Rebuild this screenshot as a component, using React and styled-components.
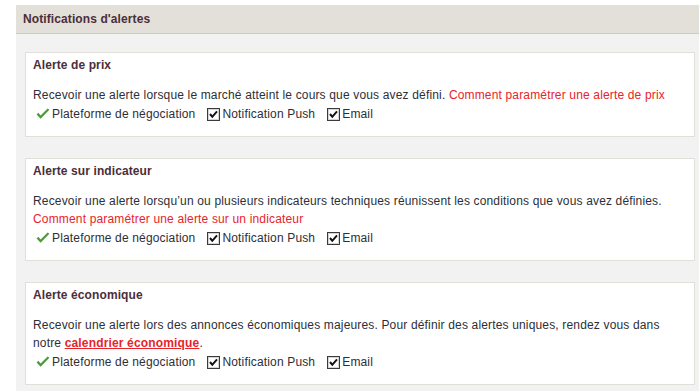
import React from "react";
import styled, { createGlobalStyle } from "styled-components";

const Global = createGlobalStyle`
  html, body { margin: 0; padding: 0; background: #ffffff; }
  body { font-family: "Liberation Sans", Arial, sans-serif; font-size: 12px; color: #333333; letter-spacing: 0.16px; }
`;

const Page = styled.div`
  padding: 5px 0 0 16px;
  width: 683px;
`;

const Header = styled.div`
  height: 28px;
  background: #e3e0d9;
  border-bottom: 1px solid #cdcac2;
  display: flex;
  align-items: center;
  padding-left: 7px;
  font-weight: bold;
  font-size: 12px;
  color: #4b2e39;
  letter-spacing: 0.1px;
`;

const Content = styled.div`
  background: #f2f2f2;
  padding: 18px 4px 8px 9px;
  display: flex;
  flex-direction: column;
  gap: 21px;
`;

const Card = styled.section`
  background: #ffffff;
  border: 1px solid #e2dfd8;
  padding: 4px 8px 12px 7px;
`;

const Title = styled.h3`
  margin: 0 0 13px 0;
  font-size: 12px;
  line-height: 16px;
  font-weight: bold;
  color: #4b2e39;
  letter-spacing: 0.1px;
`;

const Body = styled.p`
  margin: 0;
  line-height: 18px;
  color: #2e2e36;
`;

const Link = styled.a`
  color: #e8232a;
  text-decoration: ${(p) => (p.$strong ? "underline" : "none")};
  font-weight: ${(p) => (p.$strong ? "bold" : "normal")};
  cursor: pointer;
`;

const Options = styled.div`
  display: flex;
  align-items: center;
  gap: 12px;
  height: 20px;
  padding-left: 3px;
`;

const Option = styled.span`
  display: inline-flex;
  align-items: center;
  gap: 2px;
  color: #2e2e36;
`;

const Check = () => (
  <svg width="14" height="12" viewBox="0 0 14 12" aria-hidden="true">
    <path d="M0.6 6.4 L4.6 10.8 L13.4 1.8 L11.6 0.4 L4.6 7.4 L2.4 4.8 Z" fill="#4e9a3a" />
  </svg>
);

const Box = () => (
  <svg width="13" height="13" viewBox="0 0 13 13" aria-hidden="true">
    <rect x="0.5" y="0.5" width="12" height="12" fill="#ffffff" stroke="#3a3a3a" />
    <rect x="1.5" y="1.5" width="10" height="10" fill="none" stroke="#d4d4d4" />
    <path d="M3 6 L5.3 8.8 L10 3.4" fill="none" stroke="#111111" strokeWidth="2" />
  </svg>
);

const OptionRow = () => (
  <Options>
    <Option>
      <Check />
      Plateforme de négociation
    </Option>
    <Option>
      <Box />
      Notification Push
    </Option>
    <Option>
      <Box />
      Email
    </Option>
  </Options>
);

export default function App() {
  return (
    <>
      <Global />
      <Page>
        <Header>Notifications d'alertes</Header>
        <Content>
          <Card>
            <Title>Alerte de prix</Title>
            <Body>
              Recevoir une alerte lorsque le marché atteint le cours que vous avez défini.{" "}
              <Link>Comment paramétrer une alerte de prix</Link>
            </Body>
            <OptionRow />
          </Card>
          <Card>
            <Title>Alerte sur indicateur</Title>
            <Body>
              Recevoir une alerte lorsqu’un ou plusieurs indicateurs techniques réunissent les conditions que vous avez définies.
              <br />
              <Link>Comment paramétrer une alerte sur un indicateur</Link>
            </Body>
            <OptionRow />
          </Card>
          <Card>
            <Title>Alerte économique</Title>
            <Body>
              Recevoir une alerte lors des annonces économiques majeures. Pour définir des alertes uniques, rendez vous dans notre{" "}
              <Link $strong>calendrier économique</Link>.
            </Body>
            <OptionRow />
          </Card>
        </Content>
      </Page>
    </>
  );
}
